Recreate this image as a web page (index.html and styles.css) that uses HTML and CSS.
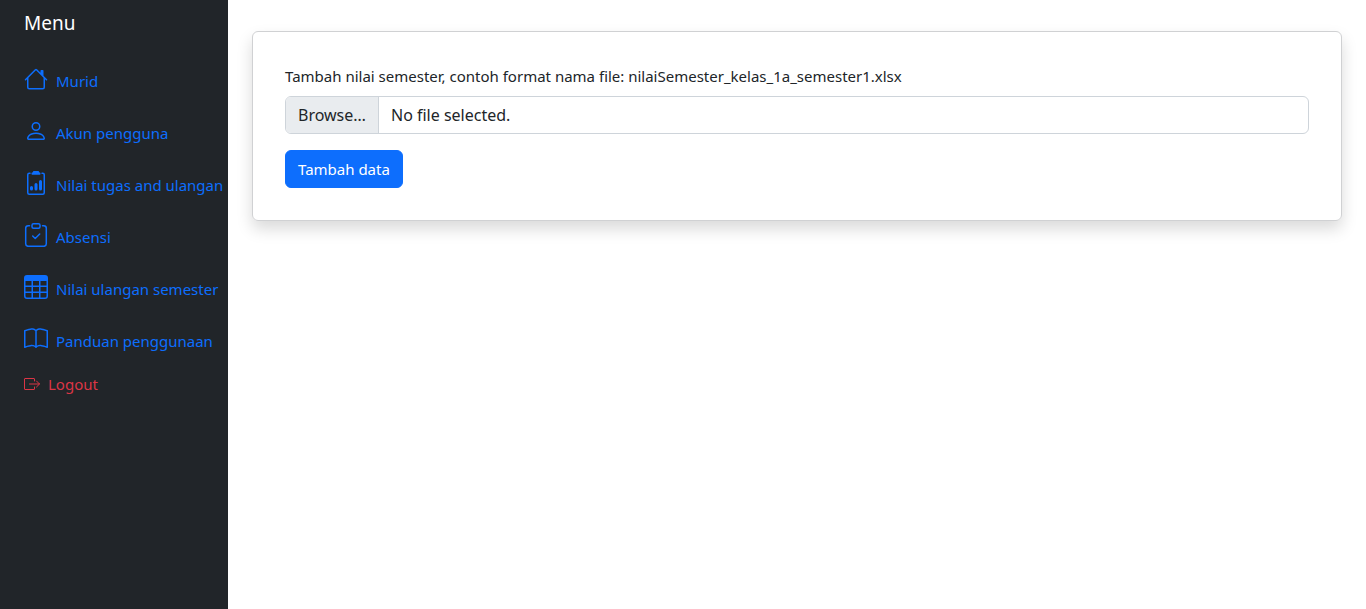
FILE: index.html
```html
<!DOCTYPE html>
<html lang="id">
<head>
<meta charset="utf-8">
<title>Nilai ulangan semester</title>
<link rel="stylesheet" href="styles.css">
</head>
<body>
<div class="layout">
  <nav class="sidebar" aria-label="Menu">
    <h1 class="sidebar-title">Menu</h1>
    <ul class="menu">
      <li><a class="menu-link" href="#murid"><svg class="icon" viewBox="0 0 16 16" aria-hidden="true"><path d="M8.707 1.5a1 1 0 0 0-1.414 0L.646 8.146a.5.5 0 0 0 .708.708L2 8.207V13.5A1.5 1.5 0 0 0 3.5 15h9a1.5 1.5 0 0 0 1.5-1.5V8.207l.646.647a.5.5 0 0 0 .708-.708L13 5.793V2.5a.5.5 0 0 0-.5-.5h-1a.5.5 0 0 0-.5.5v1.293L8.707 1.5ZM13 7.207V13.5a.5.5 0 0 1-.5.5h-9a.5.5 0 0 1-.5-.5V7.207l5-5 5 5Z"/></svg><span class="menu-text">Murid</span></a></li>
      <li><a class="menu-link" href="#akun"><svg class="icon" viewBox="0 0 16 16" aria-hidden="true"><path d="M8 8a3 3 0 1 0 0-6 3 3 0 0 0 0 6Zm2-3a2 2 0 1 1-4 0 2 2 0 0 1 4 0Zm4 8c0 1-1 1-1 1H3s-1 0-1-1 1-4 6-4 6 3 6 4Zm-1-.004c-.001-.246-.154-.986-.832-1.664C11.516 10.68 10.289 10 8 10c-2.29 0-3.516.68-4.168 1.332-.678.678-.83 1.418-.832 1.664h10Z"/></svg><span class="menu-text">Akun pengguna</span></a></li>
      <li><a class="menu-link" href="#tugas"><svg class="icon" viewBox="0 0 16 16" aria-hidden="true"><path d="M10 .5a.5.5 0 0 0-.5-.5h-3a.5.5 0 0 0-.5.5.5.5 0 0 1-.5.5.5.5 0 0 0-.5.5V2a.5.5 0 0 0 .5.5h5A.5.5 0 0 0 11 2v-.5a.5.5 0 0 0-.5-.5.5.5 0 0 1-.5-.5Z"/><path d="M3 2.5a.5.5 0 0 1 .5-.5H4a.5.5 0 0 0 0-1h-.5A1.5 1.5 0 0 0 2 2.5v12A1.5 1.5 0 0 0 3.5 16h9a1.5 1.5 0 0 0 1.5-1.5v-12A1.5 1.5 0 0 0 12.5 1H12a.5.5 0 0 0 0 1h.5a.5.5 0 0 1 .5.5v12a.5.5 0 0 1-.5.5h-9a.5.5 0 0 1-.5-.5v-12Z"/><path d="M10 7a1 1 0 1 1 2 0v5a1 1 0 1 1-2 0V7Zm-6 4a1 1 0 1 1 2 0v1a1 1 0 1 1-2 0v-1Zm4-3a1 1 0 0 0-1 1v3a1 1 0 1 0 2 0V9a1 1 0 0 0-1-1Z"/></svg><span class="menu-text">Nilai tugas and ulangan</span></a></li>
      <li><a class="menu-link" href="#absensi"><svg class="icon" viewBox="0 0 24 24" aria-hidden="true"><g fill="none" stroke="currentColor" stroke-width="1.5" stroke-linecap="round" stroke-linejoin="round"><path d="M5.500 2.800H4.200A2.500 2.500 0 0 0 1.700 5.300V20.800a2.500 2.500 0 0 0 2.500 2.500H19.800a2.500 2.500 0 0 0 2.500-2.500V5.300a2.500 2.500 0 0 0-2.500-2.500H18.500"/><rect x="8" y=".8" width="8" height="4.500" rx="1.500"/><path d="M8.700 13l2.500 2.500 4.500-4.500"/></g></svg><span class="menu-text">Absensi</span></a></li>
      <li><a class="menu-link" href="#semester"><svg class="icon" viewBox="0 0 16 16" aria-hidden="true"><path d="M0 2a2 2 0 0 1 2-2h12a2 2 0 0 1 2 2v12a2 2 0 0 1-2 2H2a2 2 0 0 1-2-2V2zm15 2h-4v3h4V4zm0 4h-4v3h4V8zm0 4h-4v3h3a1 1 0 0 0 1-1v-2zm-5 3v-3H6v3h4zm-5 0v-3H1v2a1 1 0 0 0 1 1h3zm-4-4h4V8H1v3zm0-4h4V4H1v3zm5-3v3h4V4H6zm4 4H6v3h4V8z"/></svg><span class="menu-text">Nilai ulangan semester</span></a></li>
      <li><a class="menu-link" href="#panduan"><svg class="icon" viewBox="0 0 16 16" aria-hidden="true"><path d="M1 2.828c.885-.37 2.154-.769 3.388-.893 1.330-.134 2.458.063 3.112.752v9.746c-.935-.53-2.120-.603-3.213-.493-1.180.12-2.370.461-3.287.811V2.828zm7.500-.141c.654-.689 1.782-.886 3.112-.752 1.234.124 2.503.523 3.388.893v9.923c-.918-.35-2.107-.692-3.287-.81-1.094-.111-2.278-.039-3.213.492V2.687zM8 1.783C7.015.936 5.587.81 4.287.94c-1.514.153-3.042.672-3.994 1.105A.5.5 0 0 0 0 2.500v11a.5.5 0 0 0 .707.455c.882-.4 2.303-.881 3.680-1.020 1.409-.142 2.590.087 3.223.877a.5.5 0 0 0 .78 0c.633-.79 1.814-1.019 3.222-.877 1.378.139 2.800.62 3.681 1.020A.5.5 0 0 0 16 13.500v-11a.5.5 0 0 0-.293-.455c-.952-.433-2.480-.952-3.994-1.105C10.413.809 8.985.936 8 1.783z"/></svg><span class="menu-text">Panduan penggunaan</span></a></li>
      <li><a class="logout" href="#logout"><svg class="icon-small" viewBox="0 0 16 16" aria-hidden="true"><g fill="none" stroke="currentColor" stroke-linecap="round" stroke-linejoin="round"><path d="M10.500 5V3a.5.5 0 0 0-.5-.5H1a.5.5 0 0 0-.5.5v10a.5.5 0 0 0 .5.5h9a.5.5 0 0 0 .5-.5V11M5.500 8h10M12.500 5l3 3-3 3"/></g></svg>Logout</a></li>
    </ul>
  </nav>
  <main class="content">
    <form class="card">
      <label class="form-label" for="file">Tambah nilai semester, contoh format nama file: nilaiSemester_kelas_1a_semester1.xlsx</label>
      <div class="file-field">
        <span class="file-button">Browse…</span>
        <span class="file-name">No file selected.</span>
        <input class="file-input" id="file" type="file">
      </div>
      <button class="submit" type="submit">Tambah data</button>
    </form>
  </main>
</div>
</body>
</html>
```
FILE: styles.css
```css
* {
  box-sizing: border-box;
}

body {
  margin: 0;
  background: #fff;
  color: #212529;
  font-family: "Noto Sans", "Open Sans", sans-serif;
  font-size: 15px;
  line-height: 24px;
}

.layout {
  display: flex;
  min-height: 100vh;
}

.sidebar {
  flex: none;
  width: 228px;
  padding: 8px 0 0 24px;
  background: #212529;
}

.sidebar-title {
  margin: 0;
  color: #fff;
  font-size: 19px;
  font-weight: 400;
  line-height: 30px;
}

.menu {
  margin: 16px 0 0;
  padding: 0;
  list-style: none;
  white-space: nowrap;
}

.menu-link {
  display: flex;
  gap: 8px;
  height: 52px;
  padding-top: 13px;
  color: #0d6efd;
  text-decoration: none;
}

.menu-text {
  padding-top: 2px;
}

.icon {
  flex: none;
  width: 24px;
  height: 24px;
  fill: currentColor;
}

.logout {
  display: flex;
  align-items: center;
  gap: 8px;
  padding-top: 6px;
  color: #dc3545;
  text-decoration: none;
}

.icon-small {
  width: 16px;
  height: 16px;
}

.content {
  flex: 1;
  min-width: 0;
  padding: 31px 24px;
}

.card {
  padding: 32px;
  border: 1px solid #d0d1d3;
  border-radius: 6px;
  box-shadow: 0 8px 16px rgba(0, 0, 0, 0.15);
}

.form-label {
  display: block;
  margin-bottom: 8px;
}

.file-field {
  display: flex;
  position: relative;
  margin-bottom: 16px;
  overflow: hidden;
  border: 1px solid #ced4da;
  border-radius: 6px;
  font-size: 16px;
}

.file-field:focus-within {
  border-color: #86b7fe;
}

.file-button,
.file-name {
  padding: 6px 12px;
}

.file-button {
  border-right: 1px solid #ced4da;
  background: #e9ecef;
}

.file-input {
  position: absolute;
  inset: 0;
  width: 100%;
  opacity: 0;
  cursor: pointer;
}

.submit {
  display: block;
  padding: 6px 12px;
  border: 1px solid #0d6efd;
  border-radius: 6px;
  background: #0d6efd;
  color: #fff;
  font: inherit;
  cursor: pointer;
}
```
